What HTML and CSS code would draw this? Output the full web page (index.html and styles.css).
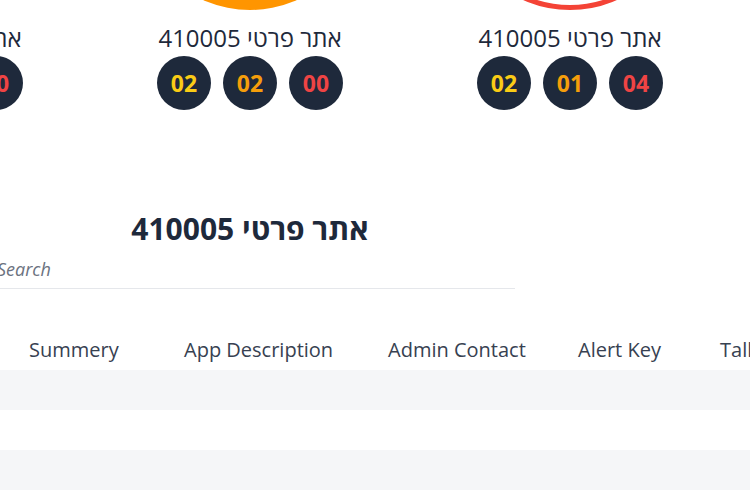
FILE: index.html
```html
<!DOCTYPE html>
<html lang="he" dir="rtl">
<head>
    <meta charset="UTF-8">
    <meta name="viewport" content="width=device-width, initial-scale=1.0">
    <title>אתר פרטי 410005</title>
    <link rel="stylesheet" href="styles.css">
</head>
<body>
    <div class="page">
        <!-- כרטיסי אתרים -->
        <section class="sites">
            <div class="site">
                <div class="chart"><div class="ring ring-red"></div></div>
                <div class="site-name">אתר פרטי 410005</div>
                <div class="counts">
                    <span class="count red">04</span>
                    <span class="count amber">01</span>
                    <span class="count yellow">02</span>
                </div>
            </div>
            <div class="site">
                <div class="chart"><div class="ring ring-orange"></div></div>
                <div class="site-name">אתר פרטי 410005</div>
                <div class="counts">
                    <span class="count red">00</span>
                    <span class="count amber">02</span>
                    <span class="count yellow">02</span>
                </div>
            </div>
            <div class="site">
                <div class="chart"><div class="ring ring-red"></div></div>
                <div class="site-name">אתר פרטי 410005</div>
                <div class="counts">
                    <span class="count red">00</span>
                    <span class="count amber">00</span>
                    <span class="count yellow">00</span>
                </div>
            </div>
        </section>

        <!-- פרטי אתר -->
        <section class="detail">
            <h2 class="detail-title">אתר פרטי 410005</h2>
            <input class="search" type="text" placeholder="Search" dir="ltr">
        </section>

        <div class="table">
            <div class="table-row table-head">
                <div class="cell">Summery</div>
                <div class="cell">App Description</div>
                <div class="cell">Admin Contact</div>
                <div class="cell">Alert Key</div>
                <div class="cell">Tally</div>
            </div>
            <div class="table-row striped"></div>
            <div class="table-row"></div>
            <div class="table-row striped"></div>
        </div>
    </div>
</body>
</html>
```

FILE: styles.css
```css
body {
    margin: 0;
    font-family: "Open Sans", "Noto Sans", sans-serif;
    color: #1e293b;
    background-color: #ffffff;
}

.page {
    width: 750px;
    height: 500px;
    overflow: hidden;
}

.sites {
    display: flex;
    padding-right: 20px;
}
.site {
    flex: 0 0 320px;
    display: flex;
    flex-direction: column;
    align-items: center;
}
.chart {
    height: 10px;
    width: 100%;
    overflow: hidden;
    display: flex;
    justify-content: center;
    align-items: flex-end;
}
.ring {
    flex: 0 0 230px;
    height: 230px;
    border-radius: 50%;
    box-sizing: border-box;
}
.ring-orange {
    background-color: #ff9500;
}
.ring-red {
    border: 5px solid #f44336;
}
.site-name {
    margin-top: 11px;
    font-size: 24px;
    line-height: 33px;
    color: #1e293b;
}
.counts {
    display: flex;
    gap: 12px;
    margin-top: 2px;
}
.count {
    width: 54px;
    height: 54px;
    border-radius: 50%;
    background-color: #1e293b;
    display: flex;
    justify-content: center;
    align-items: center;
    font-size: 23px;
    font-weight: bold;
}
.red { color: #ef4444; }
.amber { color: #f59e0b; }
.yellow { color: #facc15; }

.detail {
    width: 530px;
    margin-right: 235px;
    margin-top: 100px;
    display: flex;
    flex-direction: column;
}
.detail-title {
    margin: 0 0 4px;
    text-align: center;
    font-size: 30px;
    line-height: 37px;
    font-weight: bold;
    color: #1e293b;
}
.search {
    font-family: "Open Sans", sans-serif;
    font-size: 18px;
    padding: 6px 12px 7px;
    border: none;
    border-bottom: 1px solid #e5e7eb;
    outline: none;
    text-align: left;
}
.search::placeholder {
    color: #6b7280;
    font-style: italic;
}

.table {
    direction: ltr;
    margin-top: 41px;
}
.table-row {
    display: grid;
    grid-template-columns: 155px 204px 190px 142px 1fr;
    height: 40px;
    padding-left: 5px;
}
.striped {
    background-color: #f5f6f8;
}
.cell {
    padding-left: 24px;
    font-size: 20px;
    line-height: 40px;
    color: #374151;
    white-space: nowrap;
}
```
